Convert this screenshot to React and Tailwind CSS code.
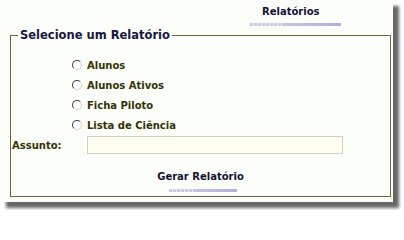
import React, { useState } from "react";

const reports = ["Alunos", "Alunos Ativos", "Ficha Piloto", "Lista de Ciência"];

function Radio({ checked }) {
  return (
    <span className="relative inline-block w-[10px] h-[10px] rounded-full border border-[#3c3c3c] border-r-[#d8d4c8] border-b-[#d8d4c8] bg-white">
      {checked && (
        <span className="absolute left-[2px] top-[2px] w-[4px] h-[4px] rounded-full bg-black" />
      )}
    </span>
  );
}

function Bar({ width }) {
  return (
    <div className={`flex h-[3px] ${width}`}>
      <div className="w-[36%] h-full bg-[repeating-linear-gradient(90deg,#c8cae6_0px,#c8cae6_3px,#eef0f8_3px,#eef0f8_4px)]" />
      <div className="flex-1 h-full bg-gradient-to-r from-[#c4c6e6] to-[#aeb2d8]" />
    </div>
  );
}

export default function App() {
  const [selected, setSelected] = useState("");
  const [assunto, setAssunto] = useState("");

  return (
    <div className="w-[404px] h-[210px] bg-white font-['DejaVu_Sans',Verdana,sans-serif] font-bold">
      <div className="w-[393px] h-[202px] bg-[#fbfdf8] shadow-[6px_6px_3px_rgba(0,0,0,0.6)] flex flex-col">
        <div className="ml-[250px] w-[91px] pt-[5px] flex flex-col">
          <div className="pl-[12px] text-[10px] leading-[14px] text-[#111136]">Relatórios</div>
          <div className="mt-[4px]">
            <Bar width="w-[91px]" />
          </div>
        </div>

        <fieldset className="mt-[3px] ml-[10px] w-[381px] border border-[#6b6436] px-0 pb-[4px]">
          <legend className="ml-[7px] px-[2px] text-[11.5px] leading-[12px] text-[#16163e]">
            Selecione um Relatório
          </legend>
          <div className="pt-[14px] pl-[61px] flex flex-col">
            {reports.map((r) => (
              <label
                key={r}
                className="h-[20px] flex items-center gap-[5px] text-[10px] text-[#333305] cursor-pointer"
                onClick={() => setSelected(r)}
              >
                <Radio checked={selected === r} />
                <span>{r}</span>
              </label>
            ))}
          </div>
          <div className="pl-[1px] mt-[1px] flex items-center">
            <span className="w-[75px] text-[10px] text-[#333305]">Assunto:</span>
            <input
              value={assunto}
              onChange={(e) => setAssunto(e.target.value)}
              className="w-[256px] h-[18px] border border-[#d0cfc0] bg-[#fdfdf0] outline-none px-1 text-[10px]"
            />
          </div>
          <div className="mt-[16px] flex flex-col items-center">
            <button className="text-[10px] leading-[14px] text-[#111136]">Gerar Relatório</button>
            <div className="mt-[5px] ml-[5px]">
              <Bar width="w-[68px]" />
            </div>
          </div>
        </fieldset>
      </div>
    </div>
  );
}
